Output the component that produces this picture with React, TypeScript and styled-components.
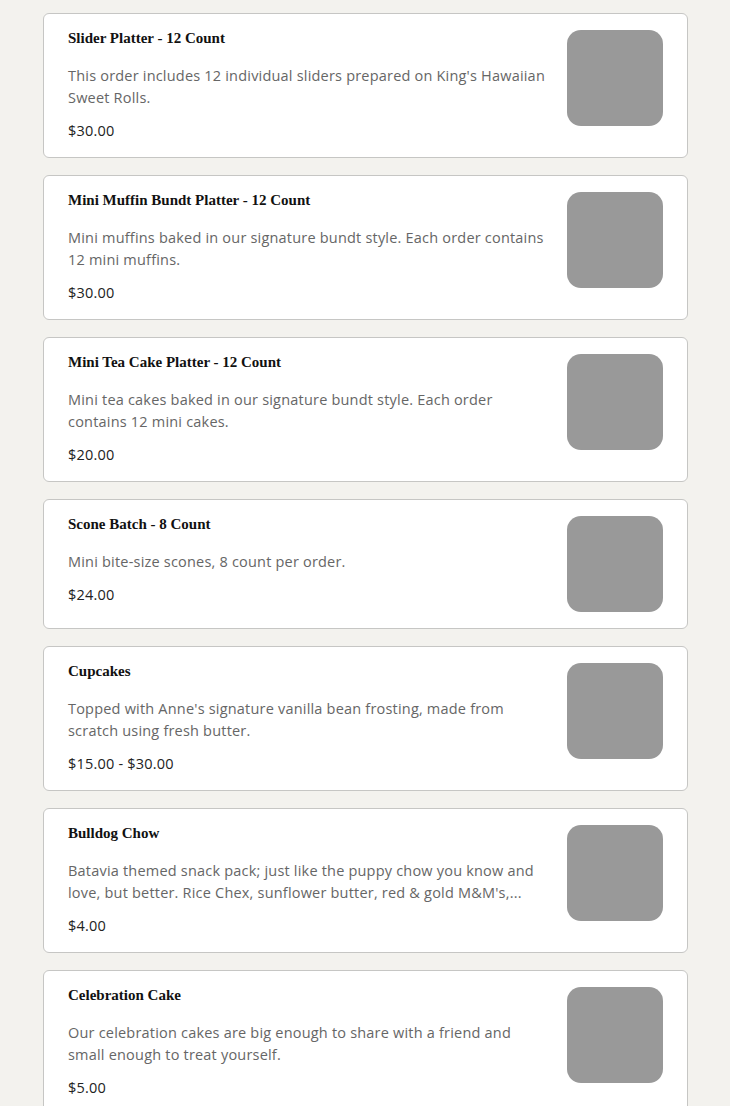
import React from "react";
import styled, { createGlobalStyle } from "styled-components";

const Global = createGlobalStyle`
  html, body { margin: 0; padding: 0; background: #f3f2ee; }
  body { font-family: "Open Sans", sans-serif; }
`;

const Page = styled.main`
  padding: 13px 42px 40px 43px;
  display: flex;
  flex-direction: column;
  gap: 17px;
`;

const Card = styled.article`
  display: flex;
  gap: 16px;
  align-items: flex-start;
  background: #fff;
  border: 1px solid #c6c6c4;
  border-radius: 6px;
  padding: 16px 24px 16px 24px;
`;

const Info = styled.div`
  flex: 1;
  min-width: 0;
  display: flex;
  flex-direction: column;
`;

const Title = styled.h3`
  margin: 0 0 18px;
  font-family: "Liberation Serif", "DejaVu Serif", serif;
  font-weight: 700;
  font-size: 15px;
  line-height: 17px;
  color: #111;
`;

const Desc = styled.p`
  margin: 0 0 12px;
  font-family: "Open Sans", sans-serif;
  font-size: 14.5px;
  line-height: 22px;
  color: #666;
  letter-spacing: 0.2px;
`;

const Price = styled.div`
  font-family: "Open Sans", sans-serif;
  font-size: 14.5px;
  line-height: 20px;
  color: #222;
  letter-spacing: 0.2px;
`;

const Thumb = styled.div`
  flex: none;
  width: 96px;
  height: 96px;
  border-radius: 14px;
  background: #999999;
`;

const items = [
  {
    t: "Slider Platter - 12 Count",
    d: "This order includes 12 individual sliders prepared on King's Hawaiian Sweet Rolls.",
    p: "$30.00",
  },
  {
    t: "Mini Muffin Bundt Platter - 12 Count",
    d: "Mini muffins baked in our signature bundt style. Each order contains 12 mini muffins.",
    p: "$30.00",
  },
  {
    t: "Mini Tea Cake Platter - 12 Count",
    d: "Mini tea cakes baked in our signature bundt style. Each order contains 12 mini cakes.",
    p: "$20.00",
  },
  { t: "Scone Batch - 8 Count", d: "Mini bite-size scones, 8 count per order.", p: "$24.00" },
  {
    t: "Cupcakes",
    d: "Topped with Anne's signature vanilla bean frosting, made from scratch using fresh butter.",
    p: "$15.00 - $30.00",
  },
  {
    t: "Bulldog Chow",
    d: "Batavia themed snack pack; just like the puppy chow you know and love, but better. Rice Chex, sunflower butter, red & gold M&M's,...",
    p: "$4.00",
  },
  {
    t: "Celebration Cake",
    d: "Our celebration cakes are big enough to share with a friend and small enough to treat yourself.",
    p: "$5.00",
  },
];

export default function App() {
  return (
    <>
      <Global />
      <Page>
        {items.map((it) => (
          <Card key={it.t}>
            <Info>
              <Title>{it.t}</Title>
              <Desc>{it.d}</Desc>
              <Price>{it.p}</Price>
            </Info>
            <Thumb />
          </Card>
        ))}
      </Page>
    </>
  );
}
